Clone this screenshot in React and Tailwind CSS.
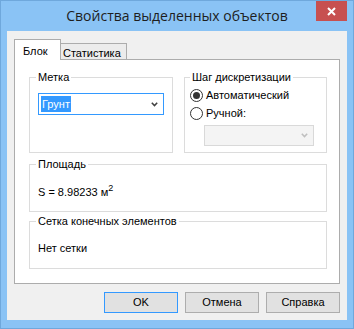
import React from "react";

function Chevron({ color = "#404040" }) {
  return (
    <svg width="7" height="5" viewBox="0 0 7 5">
      <polyline points="0.8,0.8 3.5,3.6 6.2,0.8" fill="none" stroke={color} strokeWidth="1.5" />
    </svg>
  );
}

function Radio({ checked }) {
  return (
    <span className="w-[13px] h-[13px] rounded-full border border-[#333333] bg-white flex items-center justify-center shrink-0">
      {checked && <span className="w-[7px] h-[7px] rounded-full bg-[#333333]" />}
    </span>
  );
}

function Group({ label, className, children, legendClass = "ml-[6px]" }) {
  return (
    <fieldset className={`border border-[#dcdcdc] ${className}`}>
      <legend className={`${legendClass} px-[2px] leading-[14px]`}>{label}</legend>
      {children}
    </fieldset>
  );
}

export default function App() {
  return (
    <div
      className="w-[354px] h-[329px] bg-[#8ac3f5] border border-[#6fa8dc] flex flex-col text-[11px] text-black"
      style={{ fontFamily: '"Liberation Sans", Arial, sans-serif' }}
    >
      {/* Title bar */}
      <div className="relative h-[30px] flex items-center justify-center">
        <span
          className="text-[14px] text-[#1e1e1e] leading-none -mt-[1px]"
          style={{ fontFamily: '"Open Sans", "Noto Sans", sans-serif' }}
        >
          Свойства выделенных объектов
        </span>
        <div className="absolute right-[6px] top-0 w-[31px] h-[20px] bg-[#c75050] flex items-center justify-center">
          <svg width="9" height="9" viewBox="0 0 9 9">
            <path d="M1 1 L8 8 M8 1 L1 8" stroke="white" strokeWidth="2" />
          </svg>
        </div>
      </div>

      {/* Client area */}
      <div className="mx-[6px] h-[289px] bg-[#f0f0f0] flex flex-col">
        {/* Tabs */}
        <div className="flex items-end pl-[7px] pt-[8px]">
          <div className="relative z-10 w-[47px] h-[21px] -mb-[1px] bg-white border-l border-t border-r border-[#acacac] pl-[8px] pt-[3px]">
            Блок
          </div>
          <div className="w-[66px] h-[16px] bg-[#ececec] border-t border-r border-[#acacac] pl-[2px] pt-[1px]">
            Статистика
          </div>
        </div>

        {/* Panel */}
        <div className="ml-[7px] w-[326px] h-[225px] bg-white border border-[#acacac] pl-[14px] pt-[10px] flex flex-col">
          <div className="flex gap-[11px]">
            <Group label="Метка" className="w-[144px] h-[83px]">
              <div className="pl-[8px] pt-[9px]">
                <div className="w-[126px] h-[22px] border border-[#3399ff] bg-white flex items-center pl-[2px] pr-[5px]">
                  <span className="bg-[#3399ff] text-white h-[16px] leading-[16px] px-[1px]">Грунт</span>
                  <span className="ml-auto flex">
                    <Chevron />
                  </span>
                </div>
              </div>
            </Group>
            <Group label="Шаг дискретизации" className="w-[143px] h-[83px]" legendClass="ml-[5px]">
              <div className="pl-[5px] pt-[5px] flex flex-col">
                <div className="flex items-center gap-[3px] h-[13px]">
                  <Radio checked />
                  <span>Автоматический</span>
                </div>
                <div className="flex items-center gap-[3px] h-[13px] mt-[5px]">
                  <Radio />
                  <span>Ручной:</span>
                </div>
                <div className="ml-[14px] mt-[5px] w-[110px] h-[21px] border border-[#d9d9d9] bg-[#f4f4f4] flex items-center justify-end pr-[5px]">
                  <Chevron color="#bfbfbf" />
                </div>
              </div>
            </Group>
          </div>

          <Group label="Площадь" className="w-[298px] h-[55px] mt-[4px]">
            <div className="pl-[8px] pt-[13px]">
              S = 8.98233 м<sup className="text-[9px] -top-[5px]">2</sup>
            </div>
          </Group>

          <Group label="Сетка конечных элементов" className="w-[298px] h-[55px] mt-[2px]">
            <div className="pl-[8px] pt-[12px]">Нет сетки</div>
          </Group>
        </div>

        {/* Buttons */}
        <div className="flex justify-end gap-[7px] pr-[7px] mt-[8px]">
          <button className="w-[74px] h-[21px] bg-[#e1e1e1] border border-[#3399ff] flex items-center justify-center">
            OK
          </button>
          <button className="w-[74px] h-[21px] bg-[#e1e1e1] border border-[#adadad] flex items-center justify-center">
            Отмена
          </button>
          <button className="w-[74px] h-[21px] bg-[#e1e1e1] border border-[#adadad] flex items-center justify-center">
            Справка
          </button>
        </div>
      </div>
    </div>
  );
}
